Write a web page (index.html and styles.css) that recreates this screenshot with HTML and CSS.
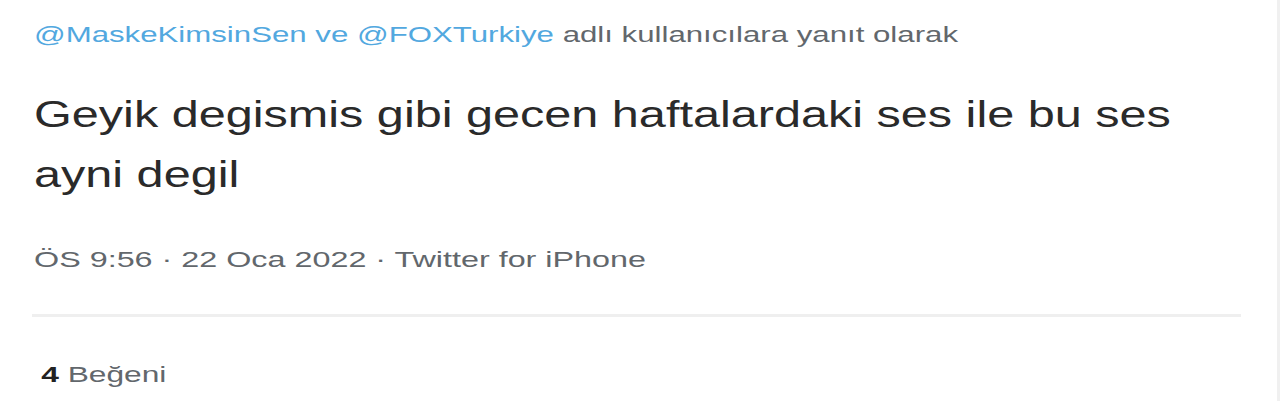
FILE: index.html
```html
<!DOCTYPE html>
<html lang="tr">
<head>
<meta charset="utf-8">
<link rel="stylesheet" href="styles.css">
</head>
<body>
<div class="page">
  <article class="tweet">
    <div class="reply wide"><span class="link">@MaskeKimsinSen</span> <span class="link">ve</span> <span class="link">@FOXTurkiye</span> <span class="muted">adlı kullanıcılara yanıt olarak</span></div>
    <p class="text">Geyik degismis gibi gecen haftalardaki ses ile bu ses ayni degil</p>
    <div class="meta wide">ÖS 9:56 · 22 Oca 2022 · Twitter for iPhone</div>
    <div class="divider"></div>
    <div class="stats wide"><span class="num">4</span> <span class="muted">Beğeni</span></div>
  </article>
  <div class="edge"></div>
</div>
</body>
</html>
```
FILE: styles.css
```css
html, body {
  margin: 0;
  padding: 0;
  background: #fff;
}
.page {
  display: flex;
  width: 1280px;
  height: 401px;
  overflow: hidden;
}
.tweet {
  flex: 1;
  display: flex;
  flex-direction: column;
  align-items: flex-start;
  padding: 0 0 0 34px;
  font-family: "Liberation Sans", Arial, sans-serif;
  color: #252525;
}
.edge {
  width: 3px;
  background: #f0f0f0;
}
.wide {
  transform-origin: 0 0;
  white-space: nowrap;
}
.reply {
  margin-top: 21px;
  font-size: 22px;
  line-height: 28px;
  transform: scaleX(1.418);
}
.link {
  color: #52a8df;
}
.muted {
  color: #62676c;
}
.text {
  margin: 36px 0 0;
  font-size: 37px;
  line-height: 60px;
  width: 880px;
  color: #2a2a2a;
  transform: scaleX(1.313);
  transform-origin: 0 0;
}
.meta {
  margin-top: 41px;
  font-size: 22px;
  line-height: 28px;
  color: #62676c;
  transform: scaleX(1.469);
}
.divider {
  align-self: stretch;
  margin: 40px 36px 0 -2px;
  height: 3px;
  background: #efefef;
}
.stats {
  margin-top: 44px;
  padding-left: 5px;
  font-size: 22px;
  line-height: 28px;
  transform: scaleX(1.44);
}
.num {
  color: #222;
  font-weight: bold;
}
```
